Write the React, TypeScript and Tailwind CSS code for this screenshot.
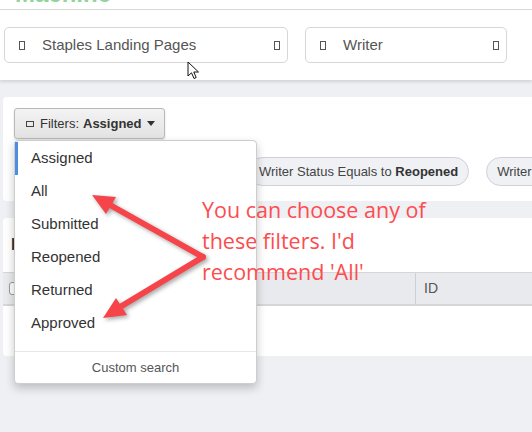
type SelectBoxProps = {
  label: string;
  width: string;
};

function GlyphBox() {
  return <span className="inline-block h-[9px] w-[6px] shrink-0 border border-[#555]" />;
}

function SelectBox({ label, width }: SelectBoxProps) {
  return (
    <div className={`flex h-[36px] items-center rounded-[5px] border border-[#d6d6d6] bg-white pl-[14px] pr-[7px] ${width}`}>
      <GlyphBox />
      <span className="ml-[17px] text-[15px] text-[#555]">{label}</span>
      <span className="ml-auto">
        <GlyphBox />
      </span>
    </div>
  );
}

const filterOptions = ["Assigned", "All", "Submitted", "Reopened", "Returned", "Approved"];

function FilterMenu() {
  return (
    <div className="absolute left-0 top-[32px] z-10 w-[243px] rounded-[4px] border border-[#cdcdcd] bg-white pt-[1px] shadow-[0_4px_10px_rgba(0,0,0,0.22)]">
      {filterOptions.map((option, index) => (
        <div
          key={option}
          className={
            index === 0
              ? "flex h-[33px] items-center border-l-[3px] border-[#4a8fe2] pl-[13px] text-[15px] text-[#333]"
              : "flex h-[33px] items-center pl-[16px] text-[15px] text-[#333]"
          }
        >
          {option}
        </div>
      ))}
      <div className="mt-[11px] border-t border-[#e6e6e6]" />
      <div className="flex h-[31px] items-center justify-center text-[13px] text-[#555]">Custom search</div>
    </div>
  );
}

function Chip({ children, width = "" }: { children: React.ReactNode; width?: string }) {
  return (
    <div className={`flex h-[29px] shrink-0 items-center rounded-full border border-[#cfd1d6] bg-[#f0f1f4] px-[10px] text-[13px] text-[#444] ${width}`}>
      {children}
    </div>
  );
}

export default function App() {
  return (
    <div className="relative h-[432px] w-[532px] overflow-hidden bg-[#eff0f4] font-['Liberation_Sans',Arial,sans-serif] text-[#333]">
      {/* header strip, logo cut off at the top */}
      <div className="h-[10px] overflow-hidden border-b border-[#d9d9d9] bg-white">
        <div className="-mt-[20px] pl-[15px] text-[24px] font-bold leading-[28px] text-[#8fd49a]">Machine</div>
      </div>

      <div className="flex gap-[17px] bg-white px-[4px] pb-[17px] pt-[17px] shadow-[0_2px_3px_rgba(0,0,0,0.12)]">
        <SelectBox width="w-[284px]" label="Staples Landing Pages" />
        <SelectBox width="w-[202px]" label="Writer" />
      </div>

      {/* filters card */}
      <div className="ml-[3px] mt-[17px] w-[560px] rounded-[4px] bg-white px-[11px] pb-[15px] pt-[11px]">
        <div className="relative w-[151px]">
          <button className="flex h-[31px] w-[151px] items-center rounded-[3px] border border-[#b9b9b9] bg-gradient-to-b from-[#f3f3f3] to-[#e3e3e3] pl-[11px] text-[13px] text-[#333] shadow-[0_1px_2px_rgba(0,0,0,0.15)]">
            <span className="inline-block h-[6px] w-[8px] border border-[#444]" />
            <span className="ml-[6px]">Filters:</span>
            <span className="ml-[4px] font-bold">Assigned</span>
            <span className="ml-[5px] inline-block border-x-[4px] border-t-[5px] border-x-transparent border-t-[#333]" />
          </button>
          <FilterMenu />
        </div>

        <div className="mt-[18px] flex gap-[17px] whitespace-nowrap">
          <Chip width="w-[217px]">Project Equals to Staples</Chip>
          <Chip>
            Writer Status Equals to&nbsp;<span className="font-bold text-[#333]">Reopened</span>
          </Chip>
          <Chip>
            Writer Status Equals to&nbsp;<span className="font-bold text-[#333]">Submitted</span>
          </Chip>
        </div>
      </div>

      {/* items card */}
      <div className="ml-[3px] mt-[17px] h-[138px] w-[560px] rounded-[4px] bg-white">
        <div className="flex h-[54px] items-center pl-[8px] text-[16px] font-bold text-[#2f3542]">Items</div>
        <div className="flex h-[34px] border-b-2 border-t border-[#d6d6d6] bg-[#e9eaed]">
          <div className="flex w-[413px] items-center border-r border-[#cfcfcf] pl-[6px]">
            <span className="inline-block h-[13px] w-[13px] rounded-[3px] border border-[#999] bg-white" />
          </div>
          <div className="flex items-center pl-[8px] text-[14px] text-[#555]">ID</div>
        </div>
      </div>

      {/* annotation */}
      <div className="absolute left-[202px] top-[194px] z-20 font-['Open_Sans','Noto_Sans',sans-serif] text-[21.5px] leading-[31px] text-[#fd4c4f]">
        <div>You can choose any of</div>
        <div>these filters. I'd</div>
        <div>recommend 'All'</div>
      </div>

      <svg
        className="pointer-events-none absolute left-0 top-0 z-30 drop-shadow-[2px_2px_2px_rgba(0,0,0,0.35)]"
        width="532"
        height="432"
        viewBox="0 0 532 432"
      >
        <line x1="203" y1="257" x2="110" y2="205" stroke="#f5444a" strokeWidth="6" strokeLinecap="round" />
        <polygon points="92,195 116,197 106,214" fill="#f5444a" />
        <line x1="203" y1="257" x2="120" y2="307" stroke="#f5444a" strokeWidth="6" strokeLinecap="round" />
        <polygon points="103,318 127,315 116,298" fill="#f5444a" />
      </svg>

      {/* mouse pointer */}
      <svg className="pointer-events-none absolute left-[187px] top-[61px] z-30" width="13" height="19" viewBox="0 0 13 19">
        <path d="M1 1 L1 15 L4.5 11.8 L7 17.5 L9.2 16.5 L6.8 11 L11.5 11 Z" fill="#fff" stroke="#111" strokeWidth="1" strokeLinejoin="round" />
      </svg>
    </div>
  );
}
